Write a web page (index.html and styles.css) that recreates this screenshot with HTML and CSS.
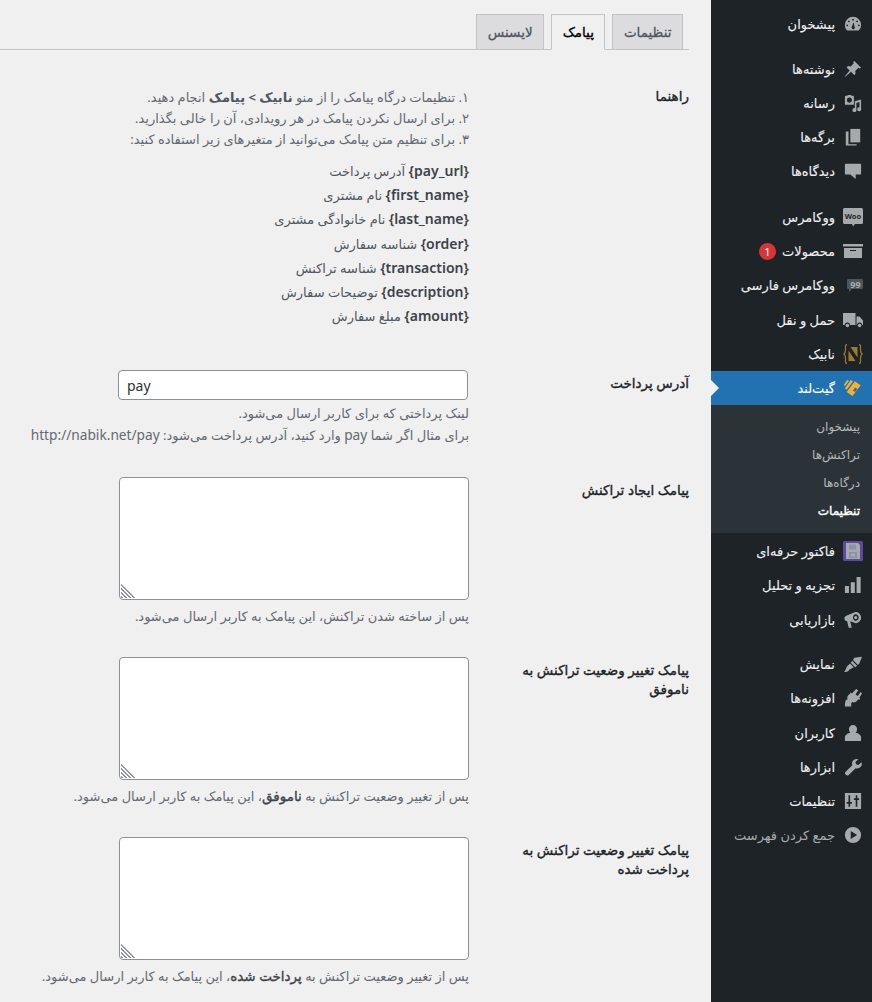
FILE: index.html
```html
<!DOCTYPE html>
<html lang="fa" dir="rtl">
<head>
<meta charset="utf-8">
<title>تنظیمات گیت‌لند</title>
<link rel="stylesheet" href="styles.css">
</head>
<body>
<div class="shell">
<nav class="sidebar">
  <ul class="menu">
    <li class="item"><svg class="icon" viewBox="0 0 20 20"><path fill-rule="evenodd" d="M10 2a9 9 0 0 0-9 9c0 2.500 1 4.700 2.600 6.300h12.800A8.800 8.800 0 0 0 19 11a9 9 0 0 0-9-9zM10 4.200a1 1 0 1 1 0 2 1 1 0 0 1 0-2zM5.500 6a1 1 0 1 1 0 2 1 1 0 0 1 0-2zm9 0a1 1 0 1 1 0 2 1 1 0 0 1 0-2zM3.500 10.500a1 1 0 1 1 0 2 1 1 0 0 1 0-2zm13 0a1 1 0 1 1 0 2 1 1 0 0 1 0-2zM10.800 8l.8 4.800a1.800 1.800 0 1 1-2.900.2z"/></svg><span>پیشخوان</span></li>
    <li class="sep sep-narrow"></li>
    <li class="item"><svg class="icon" viewBox="0 0 20 20"><path d="M11.500 1 19 8.500l-1.500 1-1.500-.8-3.500 3.500.3 3-1.500 1.500-3.400-3.600L1 19l-.4-.4 5.700-6.900-3.400-3.400 1.500-1.500 3 .3 3.500-3.500-.8-1.500z"/></svg><span>نوشته‌ها</span></li>
    <li class="item"><svg class="icon" viewBox="0 0 20 20"><path fill-rule="evenodd" d="M2 2h2V1h4v1h2a1 1 0 0 1 1 1v8a1 1 0 0 1-1 1H2a1 1 0 0 1-1-1V3a1 1 0 0 1 1-1zm4 2a2.800 2.800 0 1 0 0 5.600A2.800 2.800 0 0 0 6 4z"/><path d="M19 6v11a2.200 2.200 0 1 1-1.800-2.100V9l-3.400 1v7.800a2.200 2.200 0 1 1-1.800-2.100V8z"/></svg><span>رسانه</span></li>
    <li class="item"><svg class="icon" viewBox="0 0 20 20"><path d="M7 1h11v15H7z"/><path d="M2 4h3v14h9v1.500H2z"/></svg><span>برگه‌ها</span></li>
    <li class="item"><svg class="icon" viewBox="0 0 20 20"><path d="M2 2h16a1 1 0 0 1 1 1v10a1 1 0 0 1-1 1h-5v5l-6-5H2a1 1 0 0 1-1-1V3a1 1 0 0 1 1-1z"/></svg><span>دیدگاه‌ها</span></li>
    <li class="sep"></li>
    <li class="item"><svg class="icon icon-wide" viewBox="0 0 20 20"><path d="M1.500 1h17A1.500 1.500 0 0 1 20 2.500v13a1.500 1.500 0 0 1-1.500 1.500H12l-2 2.500L9 17H1.500A1.500 1.500 0 0 1 0 15.500v-13A1.500 1.500 0 0 1 1.500 1z"/><text class="woo" x="10" y="11.500" text-anchor="middle" direction="ltr">Woo</text></svg><span>ووکامرس</span></li>
    <li class="item"><svg class="icon icon-wide" viewBox="0 0 20 20"><path d="M0 3h20v2.500H0z"/><path fill-rule="evenodd" d="M1 7h18v10H1zM7 9v1h6V9z"/></svg><span>محصولات</span><span class="badge">1</span></li>
    <li class="item"><svg class="icon icon-dim icon-wide" viewBox="0 0 20 20"><path d="M5 4h14a1 1 0 0 1 1 1v8a1 1 0 0 1-1 1H9l-3 3v-3H5a1 1 0 0 1-1-1V5a1 1 0 0 1 1-1z"/><text class="nn" x="12.500" y="12.500" text-anchor="middle" direction="ltr">99</text></svg><span>ووکامرس فارسی</span></li>
    <li class="item"><svg class="icon icon-wide" viewBox="0 0 20 20"><path d="M0 3h12.500v12H7a2.600 2.600 0 0 0-5.200 0H0z"/><path d="M13.500 6.500h3L20 10.500V15h-.8a2.600 2.600 0 0 0-5.200 0h-.5z"/><circle cx="4.400" cy="15.500" r="1.800"/><circle cx="16.600" cy="15.500" r="1.800"/></svg><span>حمل و نقل</span></li>
    <li class="item"><svg class="icon icon-wide" viewBox="0 0 20 20"><path class="brace" d="M4 .7C2 .7 2.500 2.500 2.500 5S2.500 9 .9 10c1.600 1 1.600 2.500 1.600 5s-.5 4.300 1.500 4.300M16 .7c2 0 1.500 1.800 1.500 4.300s0 4 1.600 5c-1.600 1-1.600 2.500-1.600 5s.5 4.300-1.500 4.300"/><path class="gold" d="M5.500 6.500V17h7zM14.500 13.500V3h-7z"/></svg><span>نابیک</span></li>
    <li class="item active"><svg class="icon icon-gold" viewBox="0 0 20 20"><path d="M7.500 1 10 2.500 3 12 1 10.500zM3.500 1 5.500 2 1 8 0 6.500z"/><path fill-rule="evenodd" d="M12 2.500 18.500 7 9.500 19 3 14.500zM12.500 9.500l-2.500 3.300 2.300 1.600 2.500-3.300z"/></svg><span>گیت‌لند</span></li>
    <li class="submenu">
      <a>پیشخوان</a>
      <a>تراکنش‌ها</a>
      <a>درگاه‌ها</a>
      <a class="current">تنظیمات</a>
    </li>
    <li class="item"><svg class="icon icon-wide" viewBox="0 0 20 20"><rect width="20" height="20" rx="1.500" class="purple"/><path d="M3 2h12l2 2v14H3z"/><path class="slot" d="M6 3.500h7v5H6zM6 11h8v6H6z"/><path d="M8 12.500h4v3H8z"/></svg><span>فاکتور حرفه‌ای</span></li>
    <li class="item"><svg class="icon" viewBox="0 0 20 20"><path d="M1 11h4.500v8H1zM7.500 7h4.500v12H7.500zM14 1h4.500v18H14z"/></svg><span>تجزیه و تحلیل</span></li>
    <li class="item"><svg class="icon" viewBox="0 0 20 20"><path fill-rule="evenodd" d="M13 1c3.300 0 6 2.900 6 6.300S16.300 13.500 13 13.500L8 11.800H7L8.600 18.500H5.200L3.500 11.500A3.200 3.200 0 0 1 2.500 5.300L12.500 1zM13 3.500c-1.700 0-3 1.700-3 3.800s1.300 3.700 3 3.700 3.300-1.600 3.300-3.700S14.700 3.500 13 3.500zM13 5.500a1.800 1.800 0 1 1 0 3.600 1.800 1.800 0 0 1 0-3.600z"/></svg><span>بازاریابی</span></li>
    <li class="sep sep-narrow"></li>
    <li class="item"><svg class="icon" viewBox="0 0 20 20"><path d="M11.500 3 20 2 17 9.500 15.500 11 10 5.500z"/><path d="M9 6.500 14.500 12l-2 1.500-5-5z"/><path d="M6.700 9.500l4.200 4.200C9 15 6.500 15.500 5 17.500 4 18.700 2 19 0 19c1-1 2-3 2.500-4.500.7-2.300 3-3.500 4.200-5z"/></svg><span>نمایش</span></li>
    <li class="item"><svg class="icon" viewBox="0 0 20 20"><path d="M13.500 0l2.300 1.500-3 4.500 2.600 1.800 3-4.500 1.600 1.800-3 4.500 1 1-1.200 1.500-1-.6c-1.800 3-4.500 4.200-6.800 3l-1 1.500v3.500H1V17l.8-4.500 2.200-1C3 9.200 4 6.800 6.500 5.500l.8-1.500 1.500 1z"/></svg><span>افزونه‌ها</span></li>
    <li class="item"><svg class="icon" viewBox="0 0 20 20"><path d="M10 1a4.500 4.500 0 0 1 4.500 4.800c0 1.500-.6 3-1.500 4 3 .6 6 2.500 6 5.200V18a1 1 0 0 1-1 1H2a1 1 0 0 1-1-1v-3c0-2.700 3-4.600 6-5.200-.9-1-1.500-2.500-1.500-4A4.500 4.500 0 0 1 10 1z"/></svg><span>کاربران</span></li>
    <li class="item"><svg class="icon" viewBox="0 0 20 20"><path d="M14 1a5 5 0 0 1 2 .4L12.700 4.500l.8 2.500 2.500.7 3.300-3a5 5 0 0 1-6.300 6.700L5.500 18.500a2.300 2.300 0 0 1-3.700-3.200l7.500-7.200A5 5 0 0 1 14 1z"/></svg><span>ابزارها</span></li>
    <li class="item"><svg class="icon" viewBox="0 0 20 20"><path fill-rule="evenodd" d="M1 1h18v18H1zM5 3.500v7.500H3v2h2v3.500h1.800V13h2v-2h-2V3.500zM13 3.500V7h-2v2h2v7.500h1.800V9h2V7h-2V3.500z"/></svg><span>تنظیمات</span></li>
    <li class="item collapse"><svg class="icon" viewBox="0 0 20 20"><path fill-rule="evenodd" d="M10 1a9 9 0 1 1 0 18 9 9 0 0 1 0-18zM7.500 5.500v9l7-4.500z"/></svg><span>جمع کردن فهرست</span></li>
  </ul>
</nav>
<main class="content">
  <div class="tabs">
    <a class="tab">تنظیمات</a>
    <a class="tab tab-active">پیامک</a>
    <a class="tab">لایسنس</a>
  </div>
  <div class="form">
    <div class="row row-guide">
      <div class="label label-guide">راهنما</div>
      <div class="field">
        <ol class="steps">
          <li>۱. تنظیمات درگاه پیامک را از منو <b>نابیک &gt; پیامک</b> انجام دهید.</li>
          <li>۲. برای ارسال نکردن پیامک در هر رویدادی، آن را خالی بگذارید.</li>
          <li>۳. برای تنظیم متن پیامک می‌توانید از متغیرهای زیر استفاده کنید:</li>
        </ol>
        <ul class="vars">
          <li><b>{pay_url}</b> آدرس پرداخت</li>
          <li><b>{first_name}</b> نام مشتری</li>
          <li><b>{last_name}</b> نام خانوادگی مشتری</li>
          <li><b>{order}</b> شناسه سفارش</li>
          <li><b>{transaction}</b> شناسه تراکنش</li>
          <li><b>{description}</b> توضیحات سفارش</li>
          <li><b>{amount}</b> مبلغ سفارش</li>
        </ul>
      </div>
    </div>
    <div class="row row-url">
      <div class="label">آدرس پرداخت</div>
      <div class="field">
        <input class="input" type="text" value="pay" dir="ltr">
        <p class="desc desc-url">لینک پرداختی که برای کاربر ارسال می‌شود.<br>برای مثال اگر شما <span class="latin">pay</span> وارد کنید، آدرس پرداخت می‌شود: <span class="latin">http://nabik.net/pay</span></p>
      </div>
    </div>
    <div class="row">
      <div class="label">پیامک ایجاد تراکنش</div>
      <div class="field">
        <div class="area-wrap"><textarea class="area"></textarea></div>
        <p class="desc">پس از ساخته شدن تراکنش، این پیامک به کاربر ارسال می‌شود.</p>
      </div>
    </div>
    <div class="row">
      <div class="label">پیامک تغییر وضعیت تراکنش به ناموفق</div>
      <div class="field">
        <div class="area-wrap"><textarea class="area"></textarea></div>
        <p class="desc">پس از تغییر وضعیت تراکنش به <b>ناموفق</b>، این پیامک به کاربر ارسال می‌شود.</p>
      </div>
    </div>
    <div class="row">
      <div class="label">پیامک تغییر وضعیت تراکنش به پرداخت شده</div>
      <div class="field">
        <div class="area-wrap"><textarea class="area"></textarea></div>
        <p class="desc">پس از تغییر وضعیت تراکنش به <b>پرداخت شده</b>، این پیامک به کاربر ارسال می‌شود.</p>
      </div>
    </div>
  </div>
</main>
</div>
</body>
</html>
```

FILE: styles.css
```css
* { box-sizing: border-box; }
html, body { margin: 0; padding: 0; height: 1002px; overflow: hidden; background: #f0f0f0; }
body { font-family: "Noto Sans", "Open Sans", "DejaVu Sans", sans-serif; font-size: 13px; color: #50575e; }
ul, ol { list-style: none; margin: 0; padding: 0; }
b { font-weight: 400; font-size: 13.500px; -webkit-text-stroke: .35px; color: #3c434a; }
.shell { display: flex; height: 1002px; }
.sidebar { flex: 0 0 161px; background: #1d2327; padding-top: 7px; }
.item { position: relative; display: flex; align-items: center; height: 34.2px; padding-right: 10px; gap: 9px; color: #f0f0f1; font-size: 13px; -webkit-text-stroke: .1px; }
.sep { height: 11.500px; }
.sep-narrow { height: 10.500px; }
.icon { flex: 0 0 18px; width: 18px; height: 18px; fill: #a7aaad; }
.icon-wide { flex-basis: 20px; width: 20px; height: 20px; margin: 0 -1px 0 -1px; }
.icon-dim { fill: #50555a; }
.icon-gold { fill: #f2b134; }
.purple { fill: #5b4a9e; }
.slot { fill: #8f8fa8; }
.brace { fill: none; stroke: #a07a2c; stroke-width: 1.200; }
.gold { fill: #a07a2c; }
.woo { font-size: 7.500px; font-weight: 700; fill: #1d2327; font-family: "Noto Sans", sans-serif; -webkit-text-stroke: 0; }
.nn { font-size: 9px; font-weight: 700; fill: #a7aaad; font-family: "Noto Sans", sans-serif; -webkit-text-stroke: 0; }
.badge { width: 17px; height: 17px; border-radius: 50%; background: #d63638; color: #fff; font-size: 11px; text-align: center; line-height: 17px; margin-right: -3px; -webkit-text-stroke: 0; }
.active { background: #2271b1; color: #fff; }
.active::before { content: ""; position: absolute; left: 0; top: 50%; margin-top: -8px; border: 8px solid transparent; border-left-color: #f0f0f0; }
.submenu { background: #2c3338; padding: 8px 0; margin-bottom: 1px; }
.submenu a { display: block; height: 28px; line-height: 28px; padding-right: 12px; color: rgba(240, 240, 241, .7); font-size: 12px; }
.submenu .current { color: #fff; -webkit-text-stroke: .4px; }
.collapse { color: #a7aaad; -webkit-text-stroke: 0; }
.content { flex: 1; min-width: 0; padding: 14px 22px 0 0; }
.tabs { display: flex; gap: 7px; height: 36px; padding-right: 6px; border-bottom: 1px solid #c3c4c7; }
.tab { height: 36px; padding: 0 10.500px; line-height: 35px; background: #dcdcde; border: 1px solid #c3c4c7; color: #50575e; font-size: 13.500px; -webkit-text-stroke: .3px; }
.tab-active { background: #f0f0f0; border-bottom-color: #f0f0f0; color: #000; }
.form { padding-top: 31px; }
.row { display: flex; padding-bottom: 24px; }
.label { flex: 0 0 220px; padding-left: 20px; padding-top: 9.500px; color: #1d2327; font-size: 13.500px; line-height: 19px; -webkit-text-stroke: .35px; }
.label-guide { padding-top: 5.500px; }
.field { flex: 0 0 350px; padding-top: 6px; }
.steps li { line-height: 21px; color: #646970; }
.steps b { font-size: 13px; font-weight: 700; -webkit-text-stroke: 0; color: #50575e; }
.vars { margin-top: 9px; }
.vars li { line-height: 24.200px; color: #50575e; }
.vars b { font-family: "Noto Sans", sans-serif; font-size: 14px; font-weight: 600; -webkit-text-stroke: 0; }
.row-guide { padding-bottom: 36px; }
.row-url { padding-bottom: 25px; }
.latin { font-size: 13.700px; }
.input { display: block; width: 350px; height: 30px; margin-right: 1px; padding: 0 8px; background: #fff; border: 1px solid #8c8f94; border-radius: 4px; font: 14px "Noto Sans", sans-serif; color: #2c3338; }
.area-wrap { position: relative; width: 350px; height: 123px; }
.area-wrap::after { content: ""; position: absolute; left: 2px; bottom: 2px; width: 15px; height: 15px; clip-path: polygon(0 0, 100% 100%, 0 100%); background: repeating-linear-gradient(45deg, #8c8f94 0 1.500px, #fff 1.500px 3px); }
.area { display: block; width: 100%; height: 100%; background: #fff; border: 1px solid #8c8f94; border-radius: 4px; resize: none; }
.desc { margin: 5px 0 0; line-height: 22px; color: #646970; white-space: nowrap; }
.desc-url { margin-top: 2px; }
```
